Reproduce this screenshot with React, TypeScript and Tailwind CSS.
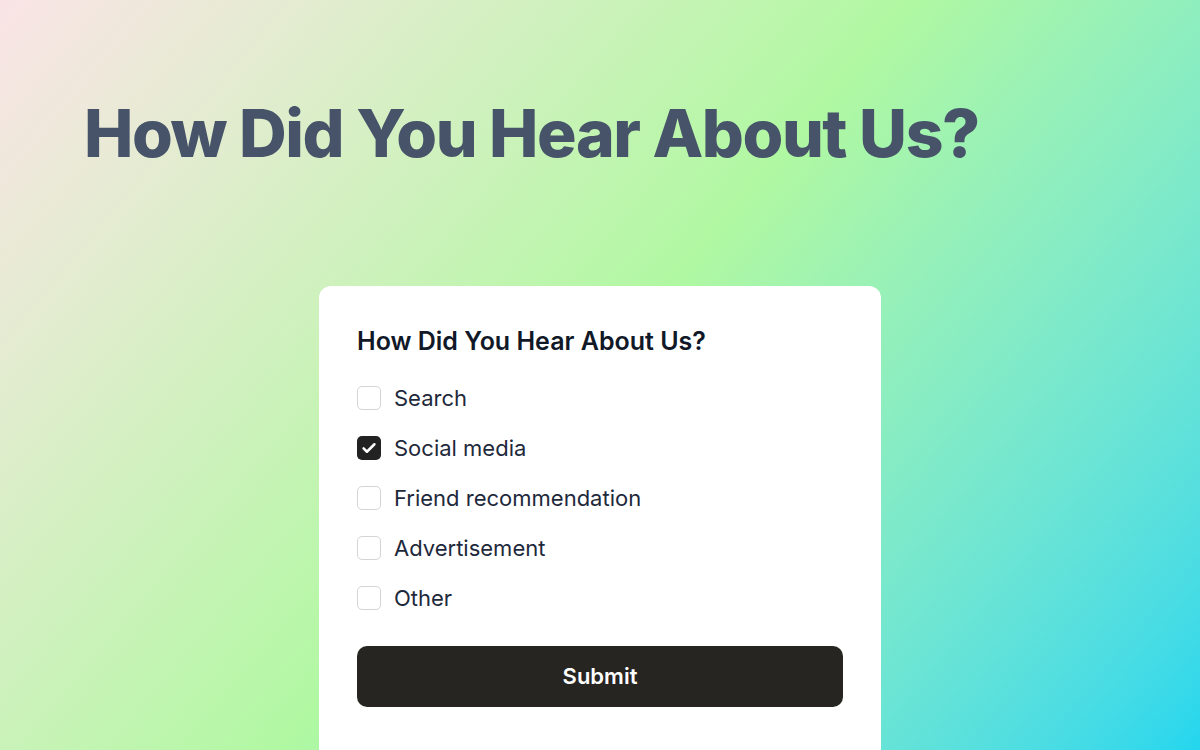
import React, { useState } from "react";

const options = [
  "Search",
  "Social media",
  "Friend recommendation",
  "Advertisement",
  "Other",
];

function CheckIcon() {
  return (
    <svg viewBox="0 0 24 24" className="h-[20px] w-[20px]" fill="none">
      <path
        d="M5.5 12.5l4 4L18.5 7.5"
        stroke="white"
        strokeWidth="3"
        strokeLinecap="round"
        strokeLinejoin="round"
      />
    </svg>
  );
}

export default function App() {
  const [checked, setChecked] = useState<Record<string, boolean>>({
    "Social media": true,
  });

  return (
    <div
      className="h-[750px] w-full overflow-hidden bg-linear-130 from-[#fae4e6] via-[#b0f8a2] via-50% to-[#22d6ee]"
      style={{ fontFamily: "Inter, 'Noto Sans', sans-serif" }}
    >
      <h1 className="pl-[84px] pt-[100px] text-[66px] font-extrabold leading-none tracking-[-0.022em] text-[#465369]">
        How Did You Hear About Us?
      </h1>

      <div className="mx-auto mt-[120px] w-[562px] rounded-[12px] bg-white px-[38px] pt-[38px] pb-[60px]">
        <h2 className="text-[25px] font-semibold leading-[34px] text-[#111827]">
          How Did You Hear About Us?
        </h2>

        <div className="mt-[26px] flex flex-col gap-[22px]">
          {options.map((opt) => {
            const on = !!checked[opt];
            return (
              <label
                key={opt}
                className="flex h-[28px] cursor-pointer items-center gap-[13px]"
                onClick={() => setChecked((c) => ({ ...c, [opt]: !c[opt] }))}
              >
                <span
                  className={
                    on
                      ? "flex h-[24px] w-[24px] items-center justify-center rounded-[5px] bg-[#222222]"
                      : "flex h-[24px] w-[24px] items-center justify-center rounded-[5px] border-[1.5px] border-[#d4d4d8] bg-white"
                  }
                >
                  {on && <CheckIcon />}
                </span>
                <span className="text-[22px] leading-[28px] text-[#1e293b]">
                  {opt}
                </span>
              </label>
            );
          })}
        </div>

        <button className="mt-[34px] flex h-[61px] w-full items-center justify-center rounded-[10px] bg-[#262522] text-[22px] font-semibold text-white">
          Submit
        </button>
      </div>
    </div>
  );
}
